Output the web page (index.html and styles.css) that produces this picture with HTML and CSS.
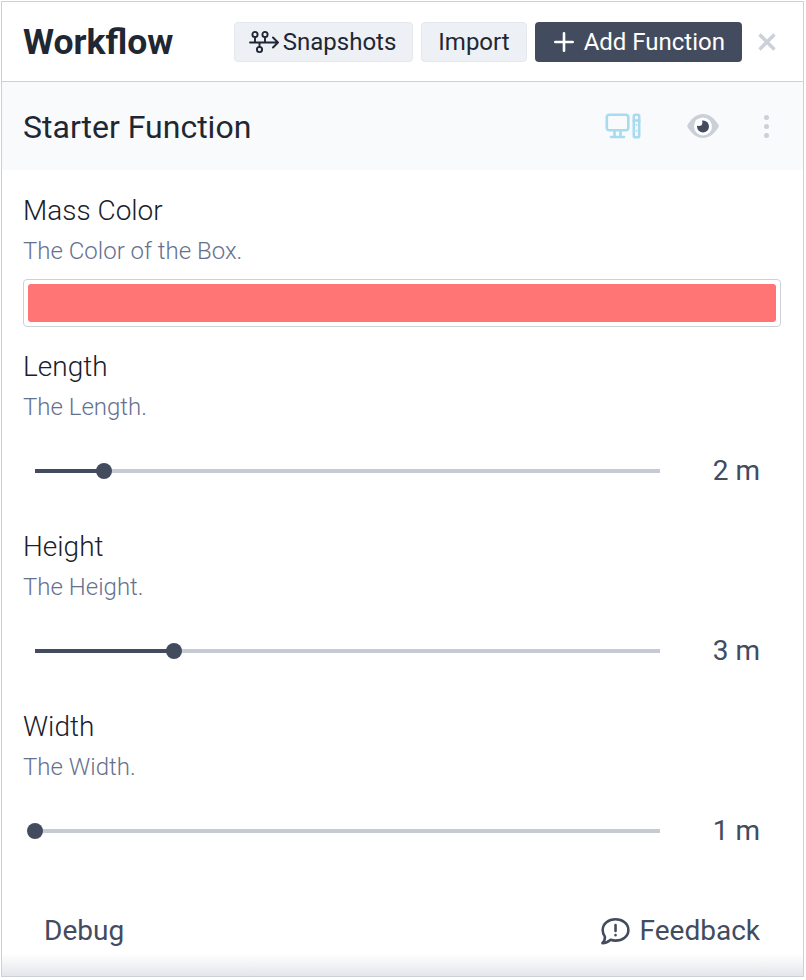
FILE: index.html
```html
<!DOCTYPE html>
<html lang="en">
<head>
<meta charset="utf-8">
<title>Workflow</title>
<link rel="stylesheet" href="styles.css">
</head>
<body>
<main class="panel">
  <header class="topbar">
    <h1 class="title">Workflow</h1>
    <div class="actions">
      <button class="btn btn-light snapshots">
        <svg class="icon-branch" viewBox="0 0 30 24" fill="none" stroke="currentColor" stroke-width="1.900" stroke-linecap="round" stroke-linejoin="round"><circle cx="6" cy="4.500" r="2.600"/><circle cx="16" cy="4.500" r="2.600"/><circle cx="10.500" cy="19.500" r="2.600"/><path d="M1 12.500h28M24 7.500l5 5-5 5M6 7.100v5.400M16 7.100v5.400M10.500 12.500v4.400"/></svg>
        Snapshots
      </button>
      <button class="btn btn-light import">Import</button>
      <button class="btn btn-dark">
        <svg class="icon-plus" viewBox="0 0 20 20" fill="none" stroke="currentColor" stroke-width="2.600" stroke-linecap="round"><path d="M10 1.300v17.400M1.300 10h17.400"/></svg>
        Add Function
      </button>
    </div>
    <svg class="icon-close" viewBox="0 0 18 18" fill="none" stroke="currentColor" stroke-width="3.400"><path d="M1.500 1.500l15 15M16.500 1.500l-15 15"/></svg>
  </header>

  <section class="fn-head">
    <h2 class="fn-title">Starter Function</h2>
    <div class="fn-tools">
      <svg class="icon-desktop" viewBox="0 0 36 26" fill="none" stroke="currentColor" stroke-width="2.600" stroke-linejoin="round" stroke-linecap="round"><rect x="1.800" y="1.800" width="21.500" height="15.500" rx="2.500"/><path d="M9.500 18v5.500M15.500 18v5.500M6 24h13"/><rect x="28.800" y="1.800" width="5.400" height="22.500" rx="1.500"/><path d="M28.800 7.500h5.400" /><path stroke-width="1.600" d="M31.500 11.500v.5M31.500 17.500v.5"/></svg>
      <svg class="icon-eye" viewBox="0 0 32 24"><path fill="#cbd0d8" d="M16 0C9 0 3.500 5.500 0 12c3.500 6.500 9 12 16 12s12.500-5.500 16-12C28.500 5.500 23 0 16 0z"/><circle cx="16" cy="12.500" r="9" fill="#fff"/><circle cx="16" cy="12.500" r="6" fill="#434b5e"/><circle cx="11.800" cy="8.500" r="3.600" fill="#fff"/></svg>
      <div class="kebab"><span></span><span></span><span></span></div>
    </div>
  </section>

  <section class="fields">
    <div class="field field-color">
      <div class="label">Mass Color</div>
      <div class="hint">The Color of the Box.</div>
      <div class="swatch"><div class="swatch-fill"></div></div>
    </div>

    <div class="field">
      <div class="label">Length</div>
      <div class="hint">The Length.</div>
      <div class="slider-row">
        <div class="slider"><div class="track"><div class="fill" style="width:69px"></div><div class="thumb" style="left:69px"></div></div></div>
        <div class="value">2 m</div>
      </div>
    </div>

    <div class="field">
      <div class="label">Height</div>
      <div class="hint">The Height.</div>
      <div class="slider-row">
        <div class="slider"><div class="track"><div class="fill" style="width:139px"></div><div class="thumb" style="left:139px"></div></div></div>
        <div class="value">3 m</div>
      </div>
    </div>

    <div class="field">
      <div class="label">Width</div>
      <div class="hint">The Width.</div>
      <div class="slider-row">
        <div class="slider"><div class="track"><div class="fill" style="width:0"></div><div class="thumb" style="left:0"></div></div></div>
        <div class="value">1 m</div>
      </div>
    </div>
  </section>

  <footer class="foot">
    <span class="foot-link">Debug</span>
    <span class="foot-link feedback">
      <svg class="icon-chat" viewBox="0 0 28 26" fill="none" stroke="currentColor" stroke-width="2.400" stroke-linejoin="round" stroke-linecap="round"><path d="M14.500 2C21 2 26.500 6 26.500 12S21 22 14.500 22c-1.500 0-3-.2-4.500-.8C8 23 5 24.300 2.200 24.300 3.800 22.700 4.800 20.500 4.600 18.300 3.200 16.500 2.500 14.300 2.500 12 2.500 6 8 2 14.500 2z"/><path d="M14.500 7.500v5.500M14.500 16.700v.3"/></svg>
      Feedback
    </span>
  </footer>
</main>
</body>
</html>
```
FILE: styles.css
```css
* { box-sizing: border-box; }
html, body { margin: 0; padding: 0; background: #fff; }
body { font-family: Roboto, "Liberation Sans", sans-serif; color: #1f2733; }
.panel {
  width: 803px; height: 976px; margin: 1px 0 0 1px;
  border: 1px solid #cbd0d9;
  display: flex; flex-direction: column; background: #fff;
}
.topbar { height: 80px; display: flex; align-items: center; border-bottom: 1px solid #cbd0d9; padding: 0 27px 0 21px; flex: none; }
.title { margin: 0; font-size: 35.500px; font-weight: 700; line-height: 40px; color: #1f2733; }
.actions { margin-left: auto; display: flex; gap: 8px; }
.btn { height: 40px; border: 0; border-radius: 4px; font-family: inherit; font-size: 24px; display: flex; align-items: center; padding: 0 17px; }
.btn-light { background: #edf0f4; color: #1f2733; border: 1px solid #e4e8ee; }
.import { padding: 0 16px; }
.snapshots { padding: 0 16px 0 14px; gap: 4px; }
.btn-dark { background: #434b5e; color: #fff; padding: 0 17px 0 19px; gap: 10px; }
.icon-branch { width: 30px; height: 24px; }
.icon-plus { width: 20px; height: 20px; }
.icon-close { width: 18px; height: 18px; color: #cbd0d9; margin-left: 16px; }
.fn-head { height: 88px; background: #f8fafc; display: flex; align-items: center; justify-content: space-between; padding: 2px 34px 0 21px; flex: none; }
.fn-title { margin: 0; font-size: 32px; font-weight: 400; line-height: 40px; color: #1f2733; }
.fn-tools { display: flex; align-items: center; margin-top: -2px; }
.icon-desktop { width: 36px; height: 26px; color: #a8daf0; }
.icon-eye { width: 32px; height: 24px; margin-left: 46px; }
.kebab { display: flex; flex-direction: column; gap: 4px; margin-left: 45px; }
.kebab span { width: 5px; height: 5px; border-radius: 50%; background: #cbd0d9; }
.fields { flex: 1; padding: 21px 22px 0 21px; }
.field { display: flex; flex-direction: column; }
.label { font-size: 28px; font-weight: 300; line-height: 40px; color: #1a202c; }
.hint { font-size: 24px; font-weight: 300; line-height: 40px; color: #66718f; }
.swatch { margin-top: 8px; height: 48px; padding: 4px; border: 1px solid #cbd0d9; border-radius: 4px; background: #fff; }
.swatch-fill { height: 100%; background: #ff7474; border-radius: 3px; }
.field-color { margin-bottom: 20px; }
.slider-row { display: flex; align-items: center; height: 60px; margin-top: 14px; margin-bottom: 26px; }
.slider { width: 625px; margin-left: 12px; }
.track { position: relative; height: 4px; background: #c6cad4; }
.fill { height: 100%; background: #434b5e; }
.thumb { position: absolute; top: -6px; width: 16px; height: 16px; margin-left: -8px; border-radius: 50%; background: #434b5e; }
.value { margin-left: auto; margin-top: -2px; padding-right: 21px; font-size: 28px; color: #434b5e; }
.foot { height: 64px; flex: none; display: flex; justify-content: space-between; align-items: flex-start; padding: 0 43px 0 42px; background: linear-gradient(to bottom, #fff 0, #fff 65%, #e4e6eb 100%); color: #434b5e; font-size: 28px; }
.foot-link { display: flex; align-items: center; gap: 10px; line-height: 40px; margin-top: -1px; color: #434b5e; }
.icon-chat { width: 30px; height: 28px; }
```
